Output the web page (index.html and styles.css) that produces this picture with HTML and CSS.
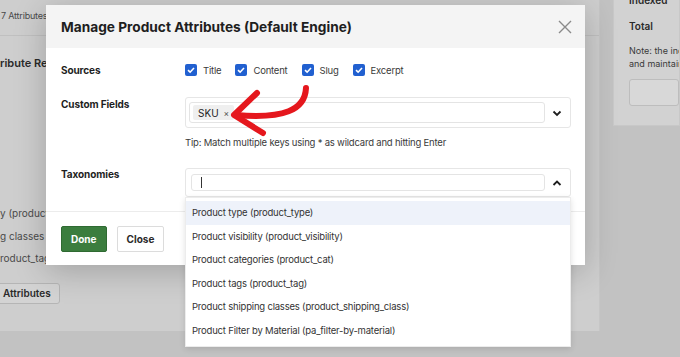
FILE: index.html
```html
<!DOCTYPE html>
<html lang="en">
<head>
  <meta charset="UTF-8" />
  <meta name="viewport" content="width=device-width, initial-scale=1.0" />
  <title>Manage Product Attributes</title>
  <link rel="stylesheet" href="styles.css">
</head>
<body>
  <div class="page">
    <main class="main-card">
      <div class="card-head">7 Attributes</div>
      <h2 class="section-title clip">ribute Rele</h2>
      <ul class="attr-list">
        <li class="clip">y (product_</li>
        <li class="clip">g classes (</li>
        <li class="clip">roduct_tag)</li>
      </ul>
      <button class="save-btn">Attributes</button>
    </main>
    <aside class="side-card">
      <div class="side-label">Indexed</div>
      <div class="side-label">Total</div>
      <p class="side-note">Note: the ind<br>and maintain</p>
      <div class="side-box"></div>
    </aside>
  </div>

  <div class="modal">
    <div class="modal-head">
      <h1>Manage Product Attributes (Default Engine)</h1>
      <svg class="close-icon" width="14" height="14" viewBox="0 0 14 14">
        <path d="M1 1 L13 13 M13 1 L1 13" stroke="#8a8a8a" stroke-width="1.4" fill="none"/>
      </svg>
    </div>

    <div class="modal-body">
      <div class="field-row sources">
        <div class="field-label">Sources</div>
        <div class="checks">
          <label class="check"><span class="box"><svg viewBox="0 0 12 12"><path d="M3 6.2 L5.1 8.2 L9 4" stroke="#fff" stroke-width="1.6" fill="none"/></svg></span>Title</label>
          <label class="check"><span class="box"><svg viewBox="0 0 12 12"><path d="M3 6.2 L5.1 8.2 L9 4" stroke="#fff" stroke-width="1.6" fill="none"/></svg></span>Content</label>
          <label class="check"><span class="box"><svg viewBox="0 0 12 12"><path d="M3 6.2 L5.1 8.2 L9 4" stroke="#fff" stroke-width="1.6" fill="none"/></svg></span>Slug</label>
          <label class="check"><span class="box"><svg viewBox="0 0 12 12"><path d="M3 6.2 L5.1 8.2 L9 4" stroke="#fff" stroke-width="1.6" fill="none"/></svg></span>Excerpt</label>
        </div>
      </div>

      <div class="field-row custom">
        <div class="field-label">Custom Fields</div>
        <div class="field-main">
          <div class="select">
            <div class="select-input">
              <span class="chip">SKU <span class="chip-x">×</span></span>
            </div>
            <svg class="chevron" width="12" height="12" viewBox="0 0 12 12"><path d="M2.5 4.5 L6 8 L9.5 4.5" stroke="#1e1e1e" stroke-width="1.8" fill="none"/></svg>
          </div>
          <p class="tip">Tip: Match multiple keys using * as wildcard and hitting Enter</p>
        </div>
      </div>

      <div class="field-row taxonomies">
        <div class="field-label">Taxonomies</div>
        <div class="field-main">
          <div class="select open">
            <div class="select-input"><span class="caret"></span></div>
            <svg class="chevron" width="12" height="12" viewBox="0 0 12 12"><path d="M2.5 8 L6 4.5 L9.5 8" stroke="#1e1e1e" stroke-width="1.8" fill="none"/></svg>
            <ul class="options">
              <li class="active">Product type (product_type)</li>
              <li>Product visibility (product_visibility)</li>
              <li>Product categories (product_cat)</li>
              <li>Product tags (product_tag)</li>
              <li>Product shipping classes (product_shipping_class)</li>
              <li>Product Filter by Material (pa_filter-by-material)</li>
            </ul>
          </div>
        </div>
      </div>
    </div>

    <div class="modal-foot">
      <button class="btn btn-done">Done</button>
      <button class="btn btn-close">Close</button>
    </div>
  </div>

  <svg class="arrow" width="680" height="357" viewBox="0 0 680 357">
    <path d="M306 88 C 305 110, 284 119, 236 115" stroke="#e5171d" stroke-width="6" fill="none" stroke-linecap="round"/>
    <path d="M257 93 L234 115 L263 133" stroke="#e5171d" stroke-width="6" fill="none" stroke-linecap="round" stroke-linejoin="round"/>
  </svg>
  <div class="highlight"></div>
</body>
</html>
```

FILE: styles.css
```css
* {
  box-sizing: border-box;
}
body {
  margin: 0;
  width: 680px;
  height: 357px;
  overflow: hidden;
  position: relative;
  background-color: #c2c2c2;
  font-family: 'Inter', 'Liberation Sans', sans-serif;
  color: #1e1e1e;
}

/* dimmed page behind the modal */
.page {
  display: flex;
  align-items: flex-start;
}
.clip {
  display: block;
  max-width: 46px;
  overflow: hidden;
  white-space: nowrap;
}
.main-card {
  width: 600px;
  height: 331px;
  background-color: #cecece;
  border-right: 1px solid #c6c6c6;
  color: #4a4a4a;
}
.card-head {
  height: 36px;
  line-height: 32px;
  padding-left: 1px;
  font-size: 9px;
  letter-spacing: -0.2px;
  border-bottom: 1px solid #c0c0c0;
}
.section-title {
  margin: 20px 0 0;
  font-size: 11px;
  font-weight: 600;
  line-height: 14px;
  color: #2a2a2a;
}
.attr-list {
  list-style: none;
  margin: 132px 0 0;
  padding: 0;
  font-size: 10px;
  line-height: 22.5px;
}
.save-btn {
  display: block;
  margin: 13px 0 0 -6px;
  height: 21px;
  padding: 0 8px;
  border: 1px solid #b5b5b5;
  border-radius: 3px;
  background-color: #d3d3d3;
  font-family: inherit;
  font-size: 10px;
  font-weight: 600;
  color: #2a2a2a;
}
.side-card {
  margin: -8px 0 0 13px;
  flex: 1;
  height: 134px;
  padding: 0 0 0 15px;
  background-color: #d2d2d2;
  border: 1px solid #c8c8c8;
  color: #3a3a3a;
  overflow: hidden;
  white-space: nowrap;
}
.side-label {
  font-size: 10px;
  font-weight: 600;
  line-height: 14px;
  margin-bottom: 12px;
  color: #2a2a2a;
}
.side-note {
  margin: -1px 0 0;
  font-size: 9px;
  line-height: 13px;
}
.side-box {
  margin-top: 9px;
  height: 27px;
  border: 1px solid #bdbdbd;
  border-radius: 3px;
  background-color: #d8d8d8;
}

/* modal */
.modal {
  position: absolute;
  left: 46px;
  top: 5px;
  width: 539px;
  height: 260px;
  background-color: #fff;
  box-shadow: 0 6px 30px rgba(0,0,0,0.22);
}
.modal-head {
  height: 43px;
  display: flex;
  align-items: center;
  justify-content: space-between;
  padding: 0 13px 0 15px;
  background-color: #f4f4f4;
}
.modal-head h1 {
  margin: 0;
  font-size: 13.7px;
  font-weight: 700;
  color: #1e1e1e;
}
.modal-body {
  padding: 14px 14px 14px 15px;
}
.field-row {
  display: flex;
}
.field-label {
  width: 124px;
  flex-shrink: 0;
  font-size: 10px;
  letter-spacing: -0.1px;
  font-weight: 700;
  color: #1e1e1e;
}
.sources {
  align-items: center;
  height: 16px;
}
.checks {
  display: flex;
  gap: 14px;
}
.check {
  display: flex;
  align-items: center;
  gap: 6px;
  font-size: 9.5px;
  letter-spacing: -0.2px;
  color: #3a3a3a;
}
.check .box {
  width: 12px;
  height: 12px;
  border-radius: 2px;
  background-color: #2160d0;
  display: flex;
}
.check .box svg {
  width: 12px;
  height: 12px;
}
.custom {
  margin-top: 19px;
}
.custom .field-label {
  padding-top: 1px;
}
.field-main {
  flex: 1;
}
.select {
  position: relative;
  display: flex;
  align-items: center;
  padding: 4px 25px 4px 3px;
  border: 1px solid #e6e6e6;
  border-radius: 3px;
  background-color: #fff;
}
.select-input {
  flex: 1;
  height: 21px;
  display: flex;
  align-items: center;
  padding-left: 3px;
  border: 1px solid #e4e4e4;
  border-radius: 3px;
}
.chip {
  display: flex;
  align-items: center;
  gap: 5px;
  height: 15px;
  padding: 0 5px;
  border-radius: 2px;
  background-color: #efefef;
  font-size: 10px;
  color: #1e1e1e;
}
.chip-x {
  font-size: 8.5px;
  color: #555;
}
.chevron {
  position: absolute;
  right: 7px;
  top: 50%;
  margin-top: -6px;
}
.tip {
  margin: 8px 0 0;
  font-size: 9.5px;
  letter-spacing: -0.2px;
  line-height: 14px;
  color: #3a3a3a;
}
.taxonomies {
  margin-top: 18px;
}
.taxonomies .select {
  padding: 5px 25px 5px 5px;
}
.taxonomies .select-input {
  height: 17px;
  padding-left: 9px;
}
.caret {
  width: 1px;
  height: 11px;
  background-color: #333;
}
.options {
  position: absolute;
  left: -1px;
  right: -1px;
  top: 100%;
  margin: 1px 0 0;
  padding: 3px 0;
  list-style: none;
  background-color: #fff;
  border: 1px solid #ececec;
  box-shadow: 0 2px 6px rgba(0,0,0,0.12);
  z-index: 2;
}
.options li {
  height: 23.6px;
  line-height: 23.6px;
  padding-left: 6px;
  font-size: 9.5px;
  letter-spacing: -0.2px;
  color: #333;
}
.options li.active {
  background-color: #eef2fa;
}
.modal-foot {
  border-top: 1px solid #ececec;
  padding: 14px 15px;
  display: flex;
  gap: 10px;
}
.btn {
  height: 26px;
  padding: 0 9px;
  border-radius: 2px;
  font-family: inherit;
  font-size: 10px;
  font-weight: 700;
}
.btn-done {
  background-color: #3b7d3e;
  border: 1px solid #2f6a32;
  color: #fff;
}
.btn-close {
  background-color: #fff;
  border: 1px solid #dcdcdc;
  color: #2a2a2a;
}

/* annotations */
.arrow {
  position: absolute;
  left: 0;
  top: 0;
  pointer-events: none;
}
.highlight {
  position: absolute;
  left: 186px;
  top: 253px;
  width: 288px;
  height: 91px;
  border: 3px solid #dc1f2b;
  pointer-events: none;
}
```
